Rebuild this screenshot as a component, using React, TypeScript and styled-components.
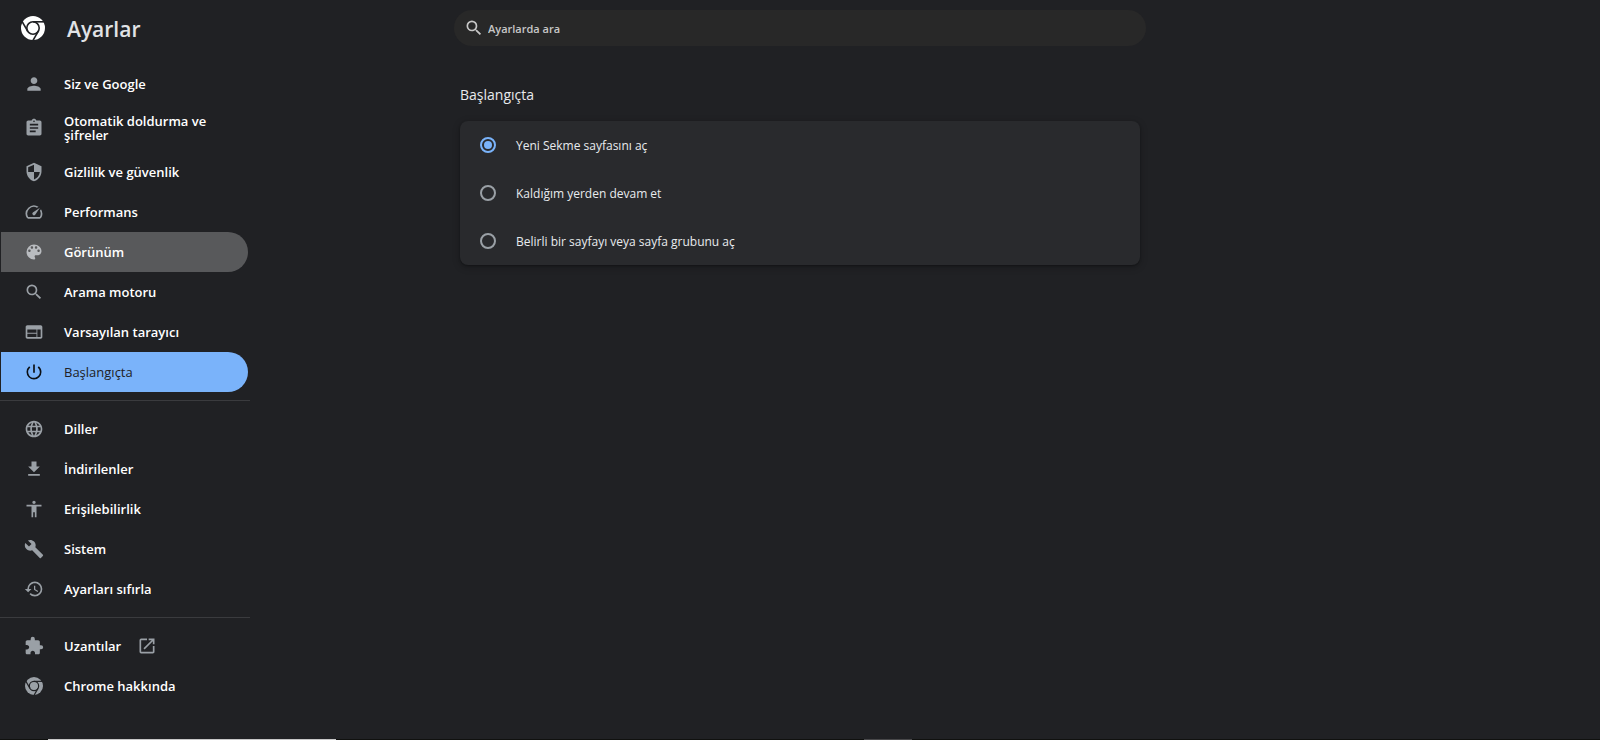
import React, { useState } from "react";
import styled, { createGlobalStyle } from "styled-components";
import {
  MdPerson,
  MdAssignment,
  MdSecurity,
  MdSearch,
  MdWeb,
  MdPowerSettingsNew,
  MdLanguage,
  MdOutlineSpeed,
  MdAccessibility,
  MdBuild,
  MdHistory,
  MdExtension,
} from "react-icons/md";

const GlobalStyle = createGlobalStyle`
  *, *::before, *::after { box-sizing: border-box; }
  body {
    margin: 0;
    background: #202124;
    color: #e8eaed;
    font-family: "Segoe UI", "Open Sans", "Noto Sans", sans-serif;
    font-size: 13px;
  }
`;

const Page = styled.div`
  display: flex;
  flex-direction: column;
  min-height: 100vh;
`;

const Columns = styled.div`
  display: flex;
  flex: 1;
`;

const Side = styled.aside`
  flex: 1 1 0;
  min-width: 250px;
`;

const Spacer = styled.div`
  flex: 1 1 0;
`;

const Brand = styled.header`
  display: flex;
  align-items: center;
  gap: 22px;
  height: 56px;
  padding-left: 21px;
  color: #fff;
`;

const BrandTitle = styled.h1`
  margin: 0;
  padding-top: 2px;
  font-size: 21px;
  font-weight: 600;
  color: #e1e3e6;
`;

const Nav = styled.nav`
  display: flex;
  flex-direction: column;
  width: 250px;
  padding-top: 8px;
`;

type Tone = "plain" | "hover" | "selected";

const NavLink = styled.a<{ $tone: Tone }>`
  display: flex;
  align-items: center;
  gap: 20px;
  min-height: 40px;
  margin: 0 2px 0 1px;
  padding: 0 20px 0 23px;
  border-radius: 0 20px 20px 0;
  line-height: 14px;
  text-decoration: none;
  color: ${(p) => (p.$tone === "selected" ? "#202124" : "#fff")};
  background: ${(p) =>
    p.$tone === "selected" ? "#7ab3fa" : p.$tone === "hover" ? "#58595b" : "transparent"};
`;

const NavIcon = styled.span<{ $tone: Tone }>`
  display: flex;
  flex: none;
  align-items: center;
  justify-content: center;
  width: 20px;
  height: 20px;
  color: ${(p) =>
    p.$tone === "selected" ? "#0b0f14" : p.$tone === "hover" ? "#b9bcc0" : "#9aa0a6"};
`;

const NavLabel = styled.span<{ $tall?: boolean; $light?: boolean }>`
  display: flex;
  align-items: center;
  gap: 16px;
  padding: ${(p) => (p.$tall ? "10px 0" : "0")};
  font-weight: ${(p) => (p.$light ? 500 : 600)};
`;

const Divider = styled.hr`
  width: 100%;
  height: 1px;
  margin: 8px 0;
  border: 0;
  background: #3a3b3e;
`;

const Main = styled.main`
  display: flex;
  flex-direction: column;
  flex: 0 1 692px;
`;

const SearchBox = styled.label`
  display: flex;
  align-items: center;
  gap: 4px;
  height: 36px;
  margin-top: 10px;
  padding: 0 10px;
  border-radius: 18px;
  background: #282828;
  color: #c7c7c7;
`;

const SearchInput = styled.input`
  flex: 1;
  min-width: 0;
  padding: 0;
  border: 0;
  outline: 0;
  background: transparent;
  color: #e8eaed;
  font: 600 11px "Segoe UI", "Open Sans", "Noto Sans", sans-serif;

  &::placeholder {
    color: #c7c7c7;
    opacity: 1;
  }
`;

const Section = styled.section`
  margin: 0 6px;
`;

const SectionTitle = styled.h2`
  margin: 38px 0 16px;
  font-size: 14px;
  font-weight: 400;
  line-height: 21px;
`;

const Card = styled.div`
  border-radius: 8px;
  background: #292a2d;
  box-shadow: 0 1px 2px rgba(0, 0, 0, 0.3), 0 2px 6px 2px rgba(0, 0, 0, 0.15);
`;

const Option = styled.label`
  display: flex;
  align-items: center;
  gap: 20px;
  height: 48px;
  padding: 0 20px;
  font-size: 12px;
`;

const Radio = styled.input`
  appearance: none;
  display: grid;
  place-items: center;
  width: 16px;
  height: 16px;
  margin: 0;
  border: 2px solid #9aa0a6;
  border-radius: 50%;

  &:checked {
    border-color: #7ab3fa;
  }

  &:checked::before {
    content: "";
    width: 8px;
    height: 8px;
    border-radius: 50%;
    background: #7ab3fa;
  }
`;

const BottomEdge = styled.footer`
  display: flex;
  height: 1px;
  background: #10110f;
`;

const EdgeSegment = styled.div<{ $width: string; $color: string }>`
  width: ${(p) => p.$width};
  background: ${(p) => p.$color};
`;

const ChromeMark = ({ size }: { size: number }) => (
  <svg width={size} height={size} viewBox="0 0 24 24" aria-hidden="true">
    <circle cx="12" cy="12" r="12" fill="currentColor" />
    <g fill="none" stroke="#202124" strokeWidth="1.6">
      <circle cx="12" cy="12" r="6.2" />
      <path d="M12 5.8H24" />
      <path d="M12 5.8H24" transform="rotate(120 12 12)" />
      <path d="M12 5.8H24" transform="rotate(240 12 12)" />
    </g>
  </svg>
);

const Glyph = ({ d }: { d: string }) => (
  <svg width="20" height="20" viewBox="0 0 24 24" fill="currentColor" aria-hidden="true">
    <path d={d} />
  </svg>
);

const PALETTE =
  "M12 3a9 9 0 0 0 0 18c.83 0 1.5-.67 1.5-1.5 0-.39-.15-.74-.39-1.01-.23-.26-.38-.61-.38-.99 0-.83.67-1.5 1.5-1.5H16c2.76 0 5-2.24 5-5 0-4.42-4.03-8-9-8zm-5.5 9c-.83 0-1.5-.67-1.5-1.5S5.67 9 6.5 9 8 9.67 8 10.5 7.33 12 6.5 12zm3-4C8.67 8 8 7.33 8 6.5S8.67 5 9.5 5s1.5.67 1.5 1.5S10.33 8 9.5 8zm5 0c-.83 0-1.5-.67-1.5-1.5S13.67 5 14.5 5s1.5.67 1.5 1.5S15.33 8 14.5 8zm3 4c-.83 0-1.5-.67-1.5-1.5S16.67 9 17.5 9s1.5.67 1.5 1.5-.67 1.5-1.5 1.5z";
const DOWNLOAD = "M19 9h-4V3H9v6H5l7 7 7-7zM5 18v2h14v-2H5z";
const OPEN =
  "M19 19H5V5h7V3H5a2 2 0 0 0-2 2v14a2 2 0 0 0 2 2h14c1.1 0 2-.9 2-2v-7h-2v7zM14 3v2h3.59l-9.83 9.83 1.41 1.41L19 6.41V10h2V3h-7z";

interface Item {
  label: string;
  icon: React.ReactNode;
  tone?: Tone;
  tall?: boolean;
  external?: boolean;
}

const groups: Item[][] = [
  [
    { label: "Siz ve Google", icon: <MdPerson size={20} /> },
    { label: "Otomatik doldurma ve şifreler", icon: <MdAssignment size={20} />, tall: true },
    { label: "Gizlilik ve güvenlik", icon: <MdSecurity size={20} /> },
    { label: "Performans", icon: <MdOutlineSpeed size={20} /> },
    { label: "Görünüm", icon: <Glyph d={PALETTE} />, tone: "hover" },
    { label: "Arama motoru", icon: <MdSearch size={20} /> },
    { label: "Varsayılan tarayıcı", icon: <MdWeb size={20} /> },
    { label: "Başlangıçta", icon: <MdPowerSettingsNew size={20} />, tone: "selected" },
  ],
  [
    { label: "Diller", icon: <MdLanguage size={20} /> },
    { label: "İndirilenler", icon: <Glyph d={DOWNLOAD} /> },
    { label: "Erişilebilirlik", icon: <MdAccessibility size={20} /> },
    { label: "Sistem", icon: <MdBuild size={20} /> },
    { label: "Ayarları sıfırla", icon: <MdHistory size={20} /> },
  ],
  [
    { label: "Uzantılar", icon: <MdExtension size={20} />, external: true },
    { label: "Chrome hakkında", icon: <ChromeMark size={18} /> },
  ],
];

const options = [
  "Yeni Sekme sayfasını aç",
  "Kaldığım yerden devam et",
  "Belirli bir sayfayı veya sayfa grubunu aç",
];

export default function App() {
  const [choice, setChoice] = useState(0);
  const [query, setQuery] = useState("");

  return (
    <Page>
      <GlobalStyle />
      <Columns>
        <Side>
          <Brand>
            <ChromeMark size={24} />
            <BrandTitle>Ayarlar</BrandTitle>
          </Brand>
          <Nav>
            {groups.map((group, index) => (
              <React.Fragment key={index}>
                {index > 0 && <Divider />}
                {group.map(({ label, icon, tone = "plain", tall, external }) => (
                  <NavLink key={label} href="#" $tone={tone}>
                    <NavIcon $tone={tone}>{icon}</NavIcon>
                    <NavLabel $tall={tall} $light={tone === "selected"}>
                      {label}
                      {external && (
                        <NavIcon $tone={tone}>
                          <Glyph d={OPEN} />
                        </NavIcon>
                      )}
                    </NavLabel>
                  </NavLink>
                ))}
              </React.Fragment>
            ))}
          </Nav>
        </Side>
        <Main>
          <SearchBox>
            <MdSearch size={20} aria-hidden="true" />
            <SearchInput
              type="text"
              aria-label="Ayarlarda ara"
              placeholder="Ayarlarda ara"
              value={query}
              onChange={(e) => setQuery(e.target.value)}
            />
          </SearchBox>
          <Section>
            <SectionTitle>Başlangıçta</SectionTitle>
            <Card role="radiogroup" aria-label="Başlangıçta">
              {options.map((text, index) => (
                <Option key={text}>
                  <Radio
                    type="radio"
                    name="startup"
                    checked={choice === index}
                    onChange={() => setChoice(index)}
                  />
                  {text}
                </Option>
              ))}
            </Card>
          </Section>
        </Main>
        <Spacer />
      </Columns>
      <BottomEdge>
        <EdgeSegment $width="3%" $color="#10110f" />
        <EdgeSegment $width="18%" $color="#c8c8c8" />
        <EdgeSegment $width="33%" $color="#10110f" />
        <EdgeSegment $width="3%" $color="#48484a" />
      </BottomEdge>
    </Page>
  );
}
